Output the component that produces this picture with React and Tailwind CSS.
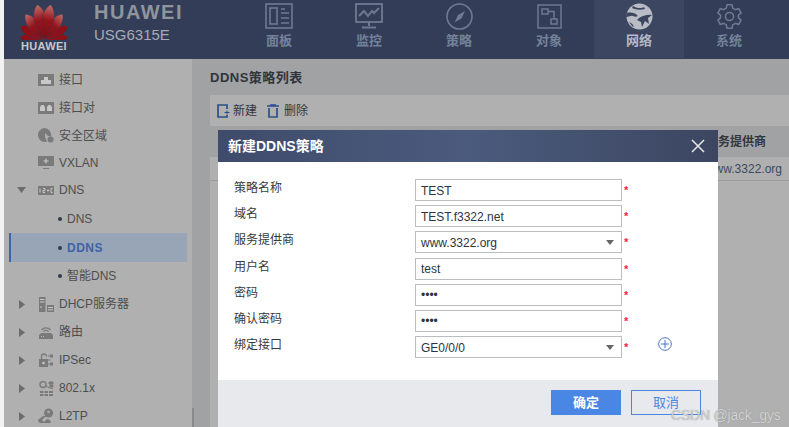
import React from 'react';

const FONT = '"Liberation Sans", "Noto Sans CJK SC", sans-serif';

// --- icons ---
function Logo() {
  const petals = [
    [-86, 24], [86, 24], [-62, 27], [62, 27], [-37, 31], [37, 31], [-11, 35], [11, 35],
  ];
  return (
    <svg width="48" height="38" viewBox="0 0 48 38">
      <defs>
        <linearGradient id="petal" x1="0" y1="1" x2="0" y2="0">
          <stop offset="0" stopColor="#7f0c14" />
          <stop offset="0.55" stopColor="#96141c" />
          <stop offset="1" stopColor="#c0706c" />
        </linearGradient>
      </defs>
      {petals.map(([a, l]) => (
        <path
          key={a}
          d={`M0 0 C${-l * 0.26} ${-l * 0.42} ${-l * 0.2} ${-l * 0.85} 0 ${-l} C${l * 0.2} ${-l * 0.85} ${l * 0.26} ${-l * 0.42} 0 0 Z`}
          fill={Math.abs(a) > 40 ? '#8f1018' : 'url(#petal)'}
          stroke="#333d57"
          strokeWidth="0.5"
          transform={`translate(24 37) rotate(${a})`}
        />
      ))}
    </svg>
  );
}

function NavPanel({ c }) {
  return (
    <svg width="28" height="26" viewBox="0 0 28 26" fill="none" stroke={c} strokeWidth="1.6">
      <rect x="1" y="1" width="26" height="24" />
      <rect x="5" y="5" width="7" height="16" />
      <path d="M16 6h4M16 10h8M16 15h8M16 20h8" />
    </svg>
  );
}
function NavMonitor({ c }) {
  return (
    <svg width="28" height="26" viewBox="0 0 28 26" fill="none" stroke={c} strokeWidth="1.8">
      <rect x="1" y="1" width="26" height="18" />
      <path d="M4 13l5-5 4 5 4-5 2 2 5-5" strokeWidth="2" />
      <path d="M14 19v4M7 24.500h14" strokeWidth="2" />
    </svg>
  );
}
function NavCompass({ c }) {
  return (
    <svg width="27" height="27" viewBox="0 0 27 27" fill="none" stroke={c} strokeWidth="1.6">
      <circle cx="13.500" cy="13.500" r="12.500" />
      <path d="M19 8l-3.500 7.500-7 4 3.500-7.500z" fill={c} stroke="none" />
    </svg>
  );
}
function NavObject({ c }) {
  return (
    <svg width="25" height="25" viewBox="0 0 25 25" fill="none" stroke={c} strokeWidth="1.500">
      <rect x="1" y="1" width="23" height="23" />
      <rect x="5" y="5" width="6" height="5" />
      <rect x="14" y="15" width="6" height="5" />
      <path d="M11 7.500h6v7.500" />
    </svg>
  );
}
function NavGlobe({ c }) {
  return (
    <svg width="27" height="27" viewBox="0 0 27 27">
      <circle cx="13.500" cy="13.500" r="13" fill={c} />
      <path d="M1 10c4-1 8 0 10 2s-2 2-4 1-5 1-7 1zM7 3c3 2 8 3 11 1l1 2c-4 1-9 1-13-1zM13 15c3-2 9-4 13-3l-4 3 1 6-4-3-3 6-1-5-4-2zM3 19c2 1 4 2 5 5l-2-1z" fill="#3a4560" />
    </svg>
  );
}
function NavGear({ c }) {
  return (
    <svg width="27" height="27" viewBox="0 0 24 24" fill="none" stroke={c} strokeWidth="1.400" strokeLinejoin="round">
      <circle cx="12" cy="12" r="3.600" />
      <path d="M9.800 1.500h4.400l.6 3 2.400 1.400 2.900-1 2.200 3.800-2.300 2v2.600l2.300 2-2.200 3.800-2.900-1-2.400 1.400-.6 3H9.800l-.6-3-2.400-1.400-2.900 1-2.200-3.800 2.300-2v-2.600l-2.300-2 2.200-3.800 2.900 1 2.400-1.400z" />
    </svg>
  );
}

const G = '#7a7a7a';
const sideIcons = {
  port: (
    <svg width="16" height="12" viewBox="0 0 16 12"><rect width="16" height="12" fill={G} /><path d="M3 10V6h3V3h4v3h3v4z" fill="#c8c8c8" /></svg>
  ),
  pair: (
    <svg width="16" height="12" viewBox="0 0 16 12"><rect width="16" height="12" fill={G} /><path d="M2 9V5l1.500-2h2L7 5v4zM9 9V5l1.500-2h2L14 5v4z" fill="#c8c8c8" /></svg>
  ),
  zone: (
    <svg width="16" height="15" viewBox="0 0 16 15"><path d="M7 0a7 7 0 1 0 2 13.700L7 9V5l3 3 3 .5A7 7 0 0 0 7 0z" fill={G} /><circle cx="12.500" cy="11.500" r="3" fill={G} /></svg>
  ),
  vxlan: (
    <svg width="16" height="14" viewBox="0 0 16 14"><rect width="16" height="10" fill={G} /><path d="M5 12h6v1H5z" fill={G} /><path d="M7.500 2.500h1v2h2v1h-2v2h-1v-2h-2v-1h2z" fill="#d0d0d0" /></svg>
  ),
  dns: (
    <svg width="16" height="9" viewBox="0 0 16 9"><rect width="16" height="9" fill={G} /><path d="M2 2.500v4M5 2.500h2v2H5v2h2M9 4.500h2M10 3.500v2M13 2.500h1.500M13 2.500v4h1.500" stroke="#c8c8c8" fill="none" /></svg>
  ),
  dhcp: (
    <svg width="15" height="15" viewBox="0 0 15 15"><rect width="6.500" height="15" fill={G} /><path d="M1 2.500h4.500M1 5h4.500M1 10h2" stroke="#c8c8c8" /><rect x="8" y="8" width="7" height="7" fill={G} /><path d="M9 10.500h5M9 12.800h5" stroke="#c8c8c8" /></svg>
  ),
  route: (
    <svg width="14" height="14" viewBox="0 0 14 14" fill="none" stroke={G}><path d="M2.500 5a6 6 0 0 1 9 0M4.500 6.500a3.500 3.500 0 0 1 5 0" strokeWidth="1.200" /><path d="M2 8h10l2 2v4H0v-4z" fill={G} stroke="none" /><path d="M2 11.500h.8M4 11.500h.8" stroke="#c8c8c8" /></svg>
  ),
  ipsec: (
    <svg width="14" height="14" viewBox="0 0 14 14" fill="none"><path d="M2.500 6V3.500a2.500 2.500 0 0 1 5 0" stroke={G} strokeWidth="1.300" /><rect y="6" width="9" height="8" fill={G} /><circle cx="4.500" cy="10" r="1.300" fill="#c8c8c8" /><path d="M9 3h3M9 7h3M9 11h3" stroke={G} /><rect x="11" y="1.500" width="3" height="3" fill={G} /><rect x="11" y="9.500" width="3" height="3" fill={G} /></svg>
  ),
  dot1x: (
    <svg width="15" height="15" viewBox="0 0 15 15"><circle cx="4" cy="3.500" r="3" fill="none" stroke={G} strokeWidth="1.500" /><path d="M6 5l8 3M10 1h4v2h-4zM11 4h3v2h-3z" stroke={G} fill={G} strokeWidth="1" /><path d="M1 10h3.500v2H1zM5.500 10H9v2H5.500zM10 10h4v2h-4zM1 13h3.500v2H1zM5.500 13H9v2H5.500zM10 13h4v2h-4z" fill={G} /></svg>
  ),
  l2tp: (
    <svg width="16" height="16" viewBox="0 0 16 16"><circle cx="10.500" cy="5" r="4.500" fill={G} /><circle cx="10.500" cy="4" r="1.300" fill="#b0b0b0" /><path d="M8 8l-4 4 2 2 3-3 3 1 1 3H3a3 3 0 0 1-3-2c0-2 3-3 5-5z" fill={G} /></svg>
  ),
};

function Caret({ open }) {
  return open ? (
    <svg width="9" height="6" viewBox="0 0 9 6"><path d="M0 0h9L4.500 6z" fill="#6c6c6c" /></svg>
  ) : (
    <svg width="6" height="9" viewBox="0 0 6 9"><path d="M0 0v9l6-4.500z" fill="#6c6c6c" /></svg>
  );
}

const navs = [
  { label: '面板', Icon: NavPanel },
  { label: '监控', Icon: NavMonitor },
  { label: '策略', Icon: NavCompass },
  { label: '对象', Icon: NavObject },
  { label: '网络', Icon: NavGlobe, active: true },
  { label: '系统', Icon: NavGear },
];

const sideRows = [
  { label: '接口', icon: 'port', h: 28 },
  { label: '接口对', icon: 'pair', h: 28 },
  { label: '安全区域', icon: 'zone', h: 27 },
  { label: 'VXLAN', icon: 'vxlan', h: 27 },
  { label: 'DNS', icon: 'dns', caret: 'open', h: 28 },
  { label: 'DNS', sub: true, h: 29 },
  { label: 'DDNS', sub: true, active: true, h: 29 },
  { label: '智能DNS', sub: true, h: 28 },
  { label: 'DHCP服务器', icon: 'dhcp', caret: 'closed', h: 28 },
  { label: '路由', icon: 'route', caret: 'closed', h: 28 },
  { label: 'IPSec', icon: 'ipsec', caret: 'closed', h: 28 },
  { label: '802.1x', icon: 'dot1x', caret: 'closed', h: 28 },
  { label: 'L2TP', icon: 'l2tp', caret: 'closed', h: 28 },
];

const fields = [
  { label: '策略名称', value: 'TEST' },
  { label: '域名', value: 'TEST.f3322.net' },
  { label: '服务提供商', value: 'www.3322.org', select: true },
  { label: '用户名', value: 'test' },
  { label: '密码', value: '••••' },
  { label: '确认密码', value: '••••' },
  { label: '绑定接口', value: 'GE0/0/0', select: true, add: true },
];

function SideRow({ row }) {
  if (row.sub) {
    return (
      <div
        style={{ height: row.h }}
        className={`flex items-center ml-[5px] w-[178px] border-l-2 ${row.active ? 'border-[#3a64b0] bg-[#98a5b6] text-[#3f62a8] font-bold tracking-[0.5px]' : 'border-transparent text-[#4e4e4e]'}`}
      >
        <span className="w-[4px] h-[4px] rounded-full bg-[#2f3b4e] ml-[47px] mr-[5px]" />
        {row.label}
      </div>
    );
  }
  return (
    <div style={{ height: row.h }} className="flex items-center text-[#4e4e4e]">
      <span className="w-[17px] ml-[9px] flex justify-center">
        {row.caret && <Caret open={row.caret === 'open'} />}
      </span>
      <span className="w-[16px] ml-[8px] flex justify-center">{sideIcons[row.icon]}</span>
      <span className="ml-[5px]">{row.label}</span>
    </div>
  );
}

export default function App() {
  return (
    <div
      className="relative w-[789px] h-[427px] overflow-hidden flex bg-[#f2f2f2] text-[12px]"
      style={{ fontFamily: FONT }}
    >
      <div className="w-[4px] shrink-0" />
      <div className="flex-1 flex flex-col min-w-0">
        {/* top bar */}
        <div className="h-[59px] shrink-0 flex bg-[#333d57]">
          <div className="w-[260px] flex">
            <div className="ml-[15px] mt-[2px] w-[50px] flex flex-col items-center">
              <Logo />
              <span className="text-[11px] font-bold text-[#c6c8cc] leading-[9px] mt-[2px] tracking-[0.3px]">HUAWEI</span>
            </div>
            <div className="ml-[25px] flex flex-col">
              <span className="text-[20px] font-bold text-[#8f949f] leading-[22px] mt-[1px] tracking-[1.5px]">HUAWEI</span>
              <span className="text-[15px] text-[#a6abb8] leading-[18px] mt-[3px]">USG6315E</span>
            </div>
          </div>
          <div className="flex h-[58px] -ml-[30px]">
            {navs.map(({ label, Icon, active }) => (
              <div
                key={label}
                className={`w-[90px] flex flex-col items-center ${active ? 'bg-[#3c4661]' : ''}`}
              >
                <div className="h-[26px] mt-[3px] flex items-center justify-center">
                  <Icon c={active ? '#b9bcc4' : '#6d7a90'} />
                </div>
                <span className={`text-[13px] font-bold leading-[14px] mt-[5px] ${active ? 'text-[#b4b9c6]' : 'text-[#73829b]'}`}>
                  {label}
                </span>
              </div>
            ))}
          </div>
        </div>

        <div className="flex-1 flex min-h-0">
          {/* sidebar */}
          <div className="relative w-[188px] shrink-0 bg-[#b0b0b0] pt-[7px]">
            {sideRows.map((row, i) => <SideRow key={i} row={row} />)}
            <div className="absolute right-[-2px] top-[349px] w-[2px] h-[20px] bg-[#8a8a8a]" />
          </div>

          {/* main */}
          <div className="flex-1 bg-[#a0a2a4] pl-[18px] min-w-0">
            <div className="h-[36px] pt-[1px] flex items-center text-[13px] font-bold text-[#30343c] tracking-[0.5px]">DDNS策略列表</div>
            <div className="bg-[#b0b0b0] h-full">
              <div className="h-[31px] flex items-center pl-[7px] text-[#33363b]">
                <svg width="13" height="14" viewBox="0 0 13 14" fill="none" stroke="#2d4f8c" strokeWidth="1.700">
                  <path d="M10 5V1H1v12h9v-2" />
                  <path d="M7.500 8.500h5M10 6.500v4" strokeWidth="1" />
                </svg>
                <span className="ml-[3px]">新建</span>
                <svg className="ml-[10px]" width="12" height="14" viewBox="0 0 12 14" fill="none" stroke="#2d4f8c" strokeWidth="1.700">
                  <path d="M0 2h12M3 1h6" />
                  <path d="M2 4v9h8V4" />
                </svg>
                <span className="ml-[5px]">删除</span>
              </div>
              <div className="h-[31px] bg-[#a0a2a4] flex items-center justify-end pr-[23px] font-bold text-[#33363b]">
                <span>务提供商</span>
              </div>
              <div className="h-[24px] bg-[#b0b0b0] flex items-center justify-end pr-[7px] text-[#3b4a63] border-b border-[#9c9c9c]">www.3322.org</div>
            </div>
          </div>
        </div>
      </div>

      {/* dialog */}
      <div className="absolute left-[218px] top-[130px] w-[500px] h-[297px] bg-white flex flex-col">
        <div className="h-[32px] shrink-0 flex items-center justify-between pl-[10px] pr-[13px] bg-gradient-to-r from-[#3f4b6b] via-[#4b5b7d] to-[#3c4661]">
          <span className="text-[14px] font-bold text-white">新建DDNS策略</span>
          <svg width="14" height="14" viewBox="0 0 14 14" stroke="#e8e8e8" strokeWidth="1.500"><path d="M1 1l12 12M13 1L1 13" /></svg>
        </div>
        <div className="flex-1 pt-[17px] flex flex-col gap-[4.200px]">
          {fields.map((f) => (
            <div key={f.label} className="flex items-start h-[22px]">
              <span className="w-[181px] ml-[16px] mt-[1px] shrink-0 text-[#3a3a3a] leading-[16px]">{f.label}</span>
              <div className="w-[207px] h-[22px] shrink-0 border border-[#bdbdc0] flex items-center justify-between pl-[5px] pr-[7px] text-[#2c3444]">
                <span className="pt-[1px]">{f.value}</span>
                {f.select && <svg width="8" height="5" viewBox="0 0 8 5"><path d="M0 0h8L4 5z" fill="#666" /></svg>}
              </div>
              <span className="ml-[2px] mt-[1px] text-[#f0254d] font-bold text-[11px] leading-[20px]">*</span>
              {f.add && (
                <svg className="ml-[30px] mt-[1px]" width="14" height="14" viewBox="0 0 14 14" fill="none" stroke="#4a76c8">
                  <circle cx="7" cy="7" r="6.300" />
                  <path d="M3 7h8M7 3v8" />
                </svg>
              )}
            </div>
          ))}
        </div>
        <div className="h-[47px] shrink-0 bg-[#e8e9ed] flex justify-end gap-[10px] pt-[10px] pr-[17px]">
          <div className="w-[70px] h-[25px] bg-[#4a86e4] flex items-center justify-center text-[13px] font-bold text-white">确定</div>
          <div className="w-[70px] h-[25px] border border-[#4a86e4] flex items-center justify-center text-[13px] text-[#4a86e4]">取消</div>
        </div>
      </div>

      {/* csdn watermark */}
      <span className="absolute left-[671px] top-[405px] text-[14px] tracking-[-0.2px] text-[#d2d2d2] [text-shadow:0_0_1px_#8a8a8a]">CSDN @jack_gys</span>
    </div>
  );
}
